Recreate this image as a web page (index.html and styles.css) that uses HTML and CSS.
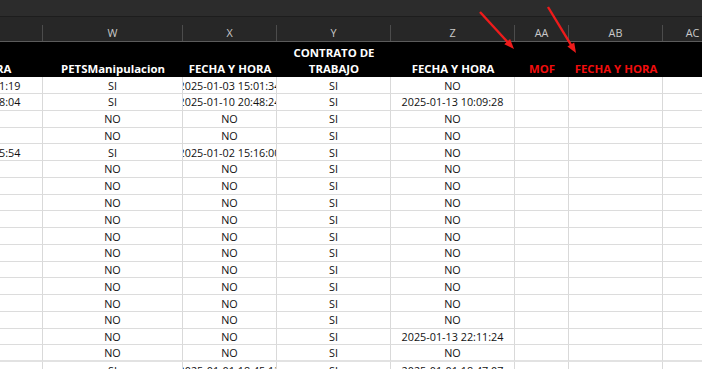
FILE: index.html
```html
<!DOCTYPE html>
<html lang="es">
<head>
    <meta charset="UTF-8">
    <meta name="viewport" content="width=device-width, initial-scale=1.0">
    <title>Hoja</title>
    <link rel="stylesheet" href="styles.css">
</head>
<body>
    <div class="app">
        <!-- barra superior -->
        <div class="topbar"></div>
        <div class="sheet">
            <!-- letras de columnas -->
            <div class="row letters">
                <div class="lt"></div>
                <div class="lt">W</div>
                <div class="lt">X</div>
                <div class="lt">Y</div>
                <div class="lt">Z</div>
                <div class="lt">AA</div>
                <div class="lt">AB</div>
                <div class="lt">AC</div>
            </div>
            <!-- encabezados -->
            <div class="row head">
                <div class="hd">FECHA Y HORA</div>
                <div class="hd">PETSManipulacion</div>
                <div class="hd">FECHA Y HORA</div>
                <div class="hd"><span>CONTRATO DE</span><span>TRABAJO</span></div>
                <div class="hd">FECHA Y HORA</div>
                <div class="hd red">MOF</div>
                <div class="hd red">FECHA Y HORA</div>
                <div class="hd"></div>
            </div>
            <div id="body"></div>
        </div>
        <!-- flechas -->
        <svg class="arrows" width="702" height="369" viewBox="0 0 702 369">
            <line x1="480" y1="12" x2="508" y2="42.5" stroke="#ee1b1b" stroke-width="2.4"/>
            <polygon points="504.3,44.3 510.1,38.9 514,49" fill="#ee1b1b"/>
            <line x1="548" y1="7" x2="571.3" y2="45.3" stroke="#ee1b1b" stroke-width="2.4"/>
            <polygon points="567.4,46.6 574.2,42.4 576,53" fill="#ee1b1b"/>
        </svg>
    </div>
    <script>
        var rows = [
            ['2025-01-03 15:01:19', 'SI', '2025-01-03 15:01:34', 'SI', 'NO'],
            ['2025-01-10 20:48:04', 'SI', '2025-01-10 20:48:24', 'SI', '2025-01-13 10:09:28'],
            ['', 'NO', 'NO', 'SI', 'NO'],
            ['', 'NO', 'NO', 'SI', 'NO'],
            ['2025-01-02 15:15:54', 'SI', '2025-01-02 15:16:00', 'SI', 'NO']
        ];
        for (var i = 0; i < 10; i++) rows.push(['', 'NO', 'NO', 'SI', 'NO']);
        rows.push(['', 'NO', 'NO', 'SI', '2025-01-13 22:11:24']);
        rows.push(['', 'NO', 'NO', 'SI', 'NO']);
        rows.push(['', 'SI', '2025-01-01 18:45:12', 'SI', '2025-01-01 18:47:07']);

        var html = '';
        rows.forEach(function (r, k) {
            var cls = 'row cells';
            if (k == 0) cls += ' first';
            if (k == rows.length - 2) cls += ' split';
            html += '<div class="' + cls + '">';
            for (var c = 0; c < 8; c++) {
                html += '<div class="c">' + (r[c] || '') + '</div>';
            }
            html += '</div>';
        });
        document.getElementById('body').innerHTML = html;
    </script>
</body>
</html>
```

FILE: styles.css
```css
*{
    margin: 0;
    padding: 0;
    box-sizing: border-box;
}
html, body{
    width: 702px;
    height: 369px;
    overflow: hidden;
    background: #fff;
}
body{
    font-family: "Open Sans", "Liberation Sans", Arial, sans-serif;
    font-size: 10.8px;
    color: #111;
}
.app{
    position: relative;
    width: 702px;
    height: 369px;
    overflow: hidden;
}
.topbar{
    height: 17px;
    background: #2c2c2c;
    border-bottom: 1px solid #1d1d1d;
}
.sheet{
    margin-left: -103px;
}
.row{
    display: grid;
    grid-template-columns: 146px 140px 94px 114px 124px 54px 94px 60px;
}
/* letras de columna */
.letters{
    height: 25px;
    background: #272727;
    border-bottom: 1px solid #5b5b5b;
}
.lt{
    margin-top: 8px;
    height: 16px;
    line-height: 16px;
    border-right: 1px solid #4c4c4c;
    color: #c9c9c9;
    text-align: center;
}
/* encabezados */
.head{
    height: 35px;
    background: #000;
}
.hd{
    display: flex;
    flex-direction: column;
    justify-content: flex-end;
    align-items: center;
    white-space: nowrap;
    overflow: hidden;
    line-height: 16px;
    font-weight: bold;
    font-size: 11.4px;
    color: #fff;
}
.hd.red{
    color: #f20d0d;
}
/* celdas */
.cells{
    height: 16.77px;
}
.cells.first{
    height: 17px;
}
.c{
    display: flex;
    justify-content: center;
    align-items: center;
    white-space: nowrap;
    overflow: hidden;
    border-right: 1px solid #d9d9d9;
    border-bottom: 1px solid #dcdcdc;
}
.split .c{
    border-bottom: 2px solid #e2e2e2;
}
.arrows{
    position: absolute;
    left: 0;
    top: 0;
    pointer-events: none;
}
```
